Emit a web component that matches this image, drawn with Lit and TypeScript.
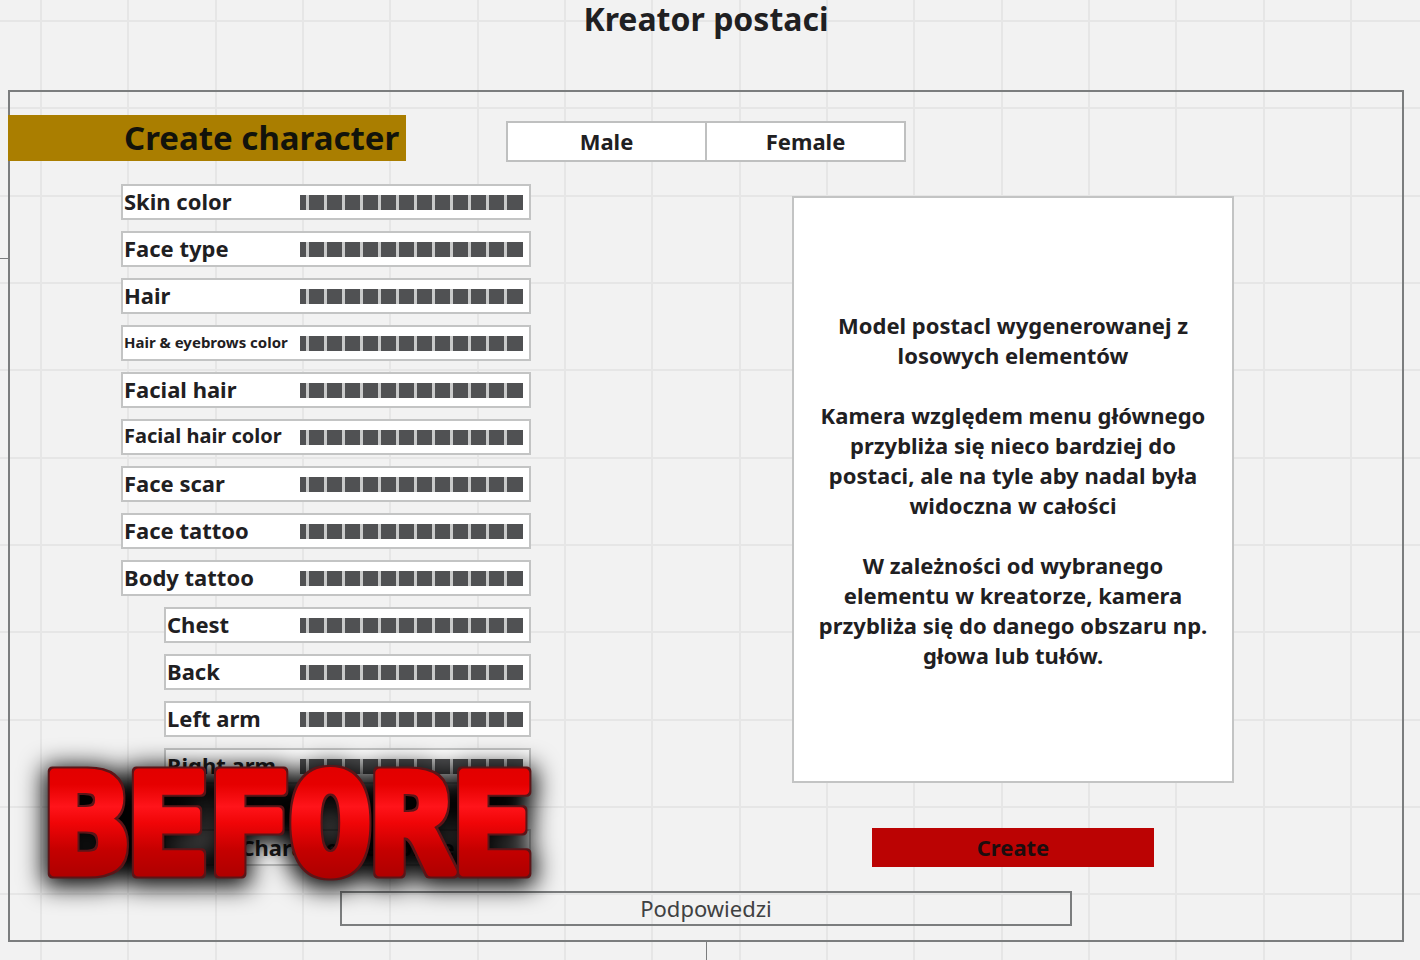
import { LitElement, html, css } from "lit";
import { customElement, state } from "lit/decorators.js";
import { classMap } from "lit/directives/class-map.js";

interface Option {
  label: string;
  nested?: boolean;
  small?: boolean;
  medium?: boolean;
}

const OPTIONS: Option[] = [
  { label: "Skin color" },
  { label: "Face type" },
  { label: "Hair" },
  { label: "Hair & eyebrows color", small: true },
  { label: "Facial hair" },
  { label: "Facial hair color", medium: true },
  { label: "Face scar" },
  { label: "Face tattoo" },
  { label: "Body tattoo" },
  { label: "Chest", nested: true },
  { label: "Back", nested: true },
  { label: "Left arm", nested: true },
  { label: "Right arm", nested: true },
];

@customElement("app-root")
export class AppRoot extends LitElement {
  @state() private gender = "";

  static styles = css`
    :host {
      display: block;
      font-family: "Noto Sans", sans-serif;
      font-weight: 700;
      font-size: 22px;
      line-height: 30px;
      color: #1f2022;
    }
    * {
      box-sizing: border-box;
    }
    .page {
      position: relative;
      display: flex;
      flex-direction: column;
      min-height: 100vh;
      padding: 0 16px 18px 8px;
      overflow: hidden;
      background-color: #f2f2f2;
      background-image:
        linear-gradient(90deg, #e6e6e6 0 2px, transparent 2px 87px, #e6e6e6 87px 89px, transparent 89px 175px, #e6e6e6 175px 177px, transparent 177px),
        linear-gradient(#e6e6e6 0 2px, transparent 2px 87px, #e6e6e6 87px 89px, transparent 89px 175px, #e6e6e6 175px 177px, transparent 177px);
      background-size: 262px 262px;
      background-position: 40px 0, 0 20px;
    }
    h1 {
      margin: 0;
      height: 90px;
      font-size: 32px;
      line-height: 38px;
      text-align: center;
    }
    .frame {
      position: relative;
      flex: 1;
      display: grid;
      grid-template-columns: 396px 1fr 1fr;
      grid-template-rows: 46px 1fr auto;
      padding: 23px 0 14px;
      border: 2px solid #7b7d7e;
    }
    .frame::before,
    .frame::after {
      content: "";
      position: absolute;
      background: #7b7d7e;
    }
    .frame::before {
      left: -10px;
      top: 166px;
      width: 8px;
      height: 1px;
    }
    .frame::after {
      left: 50%;
      top: 100%;
      width: 1px;
      height: 20px;
    }
    h2 {
      margin: 0 0 0 -2px;
      padding-left: 116px;
      background: #aa7e00;
      color: #12130b;
      font-size: 33px;
      line-height: 46px;
      white-space: nowrap;
    }
    .gender {
      grid-column: 2 / 4;
      display: flex;
      width: 400px;
      height: 41px;
      margin: 6px 0 0 100px;
      border: 2px solid #bfc0c0;
      background: #fff;
    }
    button {
      border: 0;
      padding: 0 0 2px;
      font: inherit;
      color: inherit;
      background: none;
      cursor: pointer;
    }
    .gender button {
      flex: 1;
    }
    .gender button + button {
      border-left: 2px solid #bfc0c0;
    }
    .options {
      grid-column: 1 / 3;
      width: 410px;
      margin: 23px 0 0 111px;
      display: flex;
      flex-direction: column;
      gap: 11px;
    }
    .option {
      display: flex;
      justify-content: space-between;
      align-items: center;
      height: 36px;
      padding: 0 6px 0 1px;
      border: 2px solid #c3c4c4;
      background: #fff;
    }
    .option label {
      padding-bottom: 2px;
    }
    .nested {
      margin-left: 43px;
    }
    .small label {
      font-size: 15px;
    }
    .medium label {
      font-size: 20px;
    }
    input {
      appearance: none;
      width: 223px;
      height: 15px;
      margin: 0;
      background: repeating-linear-gradient(90deg, #505153 0 15px, #c9caca 15px 18px) 9px 0 / 198px 15px no-repeat,
        linear-gradient(90deg, #505153 0 6px, #c9caca 6px 9px, #505153 9px);
    }
    input::-webkit-slider-thumb {
      appearance: none;
      width: 6px;
      height: 15px;
    }
    .preset {
      width: 367px;
      height: 37px;
      margin: 34px 0 0 43px;
      border: 2px solid #c3c4c4;
      background: #fff;
    }
    .preview {
      grid-column: 3;
      justify-self: end;
      width: 442px;
      margin: 35px 168px 0 0;
      display: flex;
      flex-direction: column;
      align-items: center;
    }
    .model {
      width: 100%;
      height: 587px;
      display: flex;
      flex-direction: column;
      justify-content: center;
      gap: 30px;
      padding: 0 20px;
      border: 2px solid #c3c4c4;
      background: #fff;
      text-align: center;
    }
    .model p {
      margin: 0;
    }
    .create {
      width: 282px;
      height: 39px;
      margin-top: 45px;
      background: #bb0303;
      color: #1c0d0e;
    }
    .hints {
      grid-column: 1 / 4;
      justify-self: center;
      width: 732px;
      height: 35px;
      border: 2px solid #7b7d7e;
      font-weight: 400;
      line-height: 30px;
      text-align: center;
      color: #404142;
    }
    .stamp {
      position: absolute;
      left: 0;
      top: 720px;
      pointer-events: none;
    }
    .stamp text {
      font-family: "DejaVu Sans Mono", monospace;
      font-weight: 700;
      font-size: 135px;
    }
  `;

  render() {
    return html`
      <main class="page">
        <h1>Kreator postaci</h1>
        <section class="frame">
          <h2>Create character</h2>
          <div class="gender">
            ${["Male", "Female"].map(
              (g) => html`<button aria-pressed=${this.gender === g} @click=${() => (this.gender = g)}>${g}</button>`,
            )}
          </div>
          <div class="options">
            ${OPTIONS.map(
              (o, i) => html`
                <div class=${classMap({ option: true, nested: !!o.nested, small: !!o.small, medium: !!o.medium })}>
                  <label for="option-${i}">${o.label}</label>
                  <input id="option-${i}" type="range" min="0" max="12" value="0" />
                </div>
              `,
            )}
            <button class="preset">Character template</button>
          </div>
          <div class="preview">
            <div class="model">
              <p>Model postacl wygenerowanej z losowych elementów</p>
              <p>Kamera względem menu głównego przybliża się nieco bardziej do postaci, ale na tyle aby nadal była widoczna w całości</p>
              <p>W zależności od wybranego elementu w kreatorze, kamera przybliża się do danego obszaru np. głowa lub tułów.</p>
            </div>
            <button class="create">Create</button>
          </div>
          <div class="hints">Podpowiedzi</div>
        </section>
        <svg class="stamp" width="620" height="240" viewBox="0 0 620 240">
          <defs>
            <linearGradient id="red" gradientUnits="userSpaceOnUse" x1="0" y1="48" x2="0" y2="158">
              <stop offset="0" stop-color="#e20000" />
              <stop offset="0.15" stop-color="#e60000" />
              <stop offset="0.35" stop-color="#ff141a" />
              <stop offset="0.5" stop-color="#f00507" />
              <stop offset="0.75" stop-color="#c40000" />
              <stop offset="1" stop-color="#ad0000" />
            </linearGradient>
            <filter id="edge" filterUnits="userSpaceOnUse" x="0" y="0" width="620" height="240" color-interpolation-filters="sRGB">
              <feMorphology in="SourceAlpha" operator="dilate" radius="2" result="fat" />
              <feFlood flood-color="#5c1518" />
              <feComposite in2="fat" operator="in" result="outline" />
              <feMorphology in="SourceAlpha" operator="dilate" radius="6" result="wide" />
              <feGaussianBlur in="wide" stdDeviation="12" result="soft" />
              <feOffset in="soft" dy="4" result="shade" />
              <feMerge>
                <feMergeNode in="shade" />
                <feMergeNode in="outline" />
                <feMergeNode in="SourceGraphic" />
              </feMerge>
            </filter>
          </defs>
          <text x="46" y="152" fill="url(#red)" stroke="url(#red)" stroke-width="9" stroke-linejoin="round" filter="url(#edge)">BEFORE</text>
        </svg>
      </main>
    `;
  }
}
